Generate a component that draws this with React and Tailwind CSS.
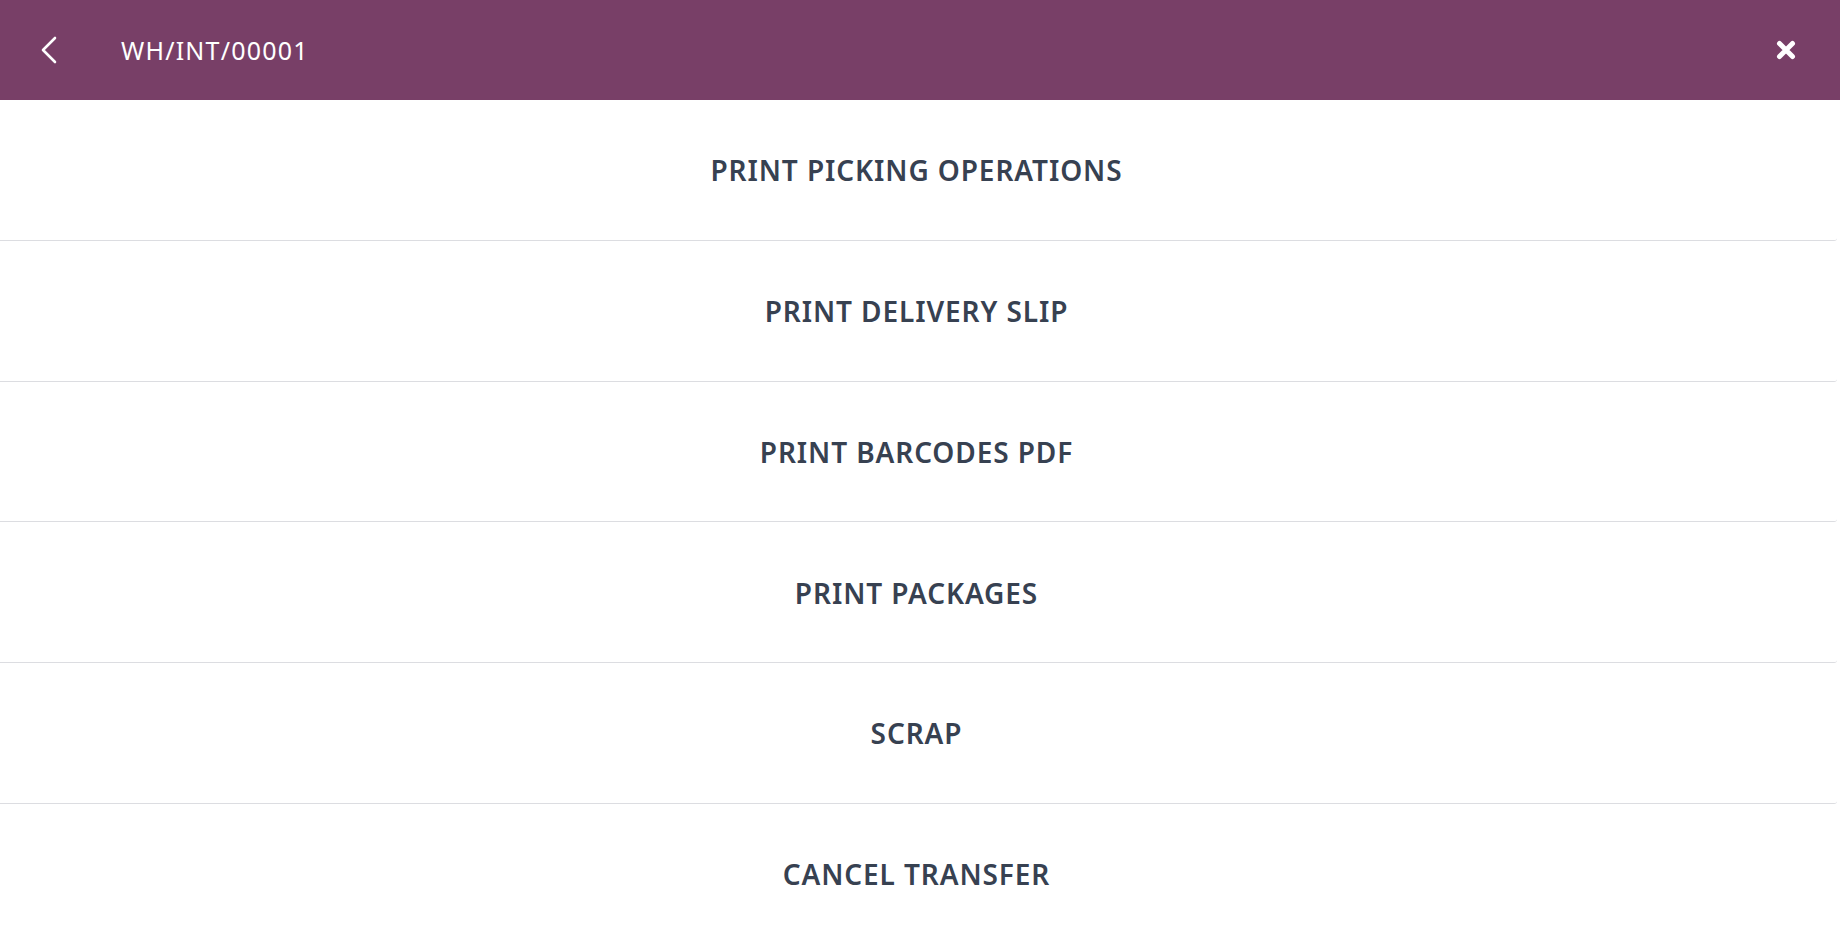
import React from "react";

const items = [
  "PRINT PICKING OPERATIONS",
  "PRINT DELIVERY SLIP",
  "PRINT BARCODES PDF",
  "PRINT PACKAGES",
  "SCRAP",
  "CANCEL TRANSFER",
];

export default function App() {
  return (
    <div
      className="w-[1840px] h-[941px] overflow-hidden bg-white"
      style={{ fontFamily: '"Noto Sans", "Open Sans", sans-serif' }}
    >
      <header className="h-[100px] bg-[#783f67] flex items-center text-white">
        <button className="w-[121px] h-full flex items-center pl-[40px]">
          <svg width="18" height="28" viewBox="0 0 18 28" fill="none">
            <path d="M15 2 L3 14 L15 26" stroke="white" strokeWidth="2.6" strokeLinecap="round" strokeLinejoin="round" />
          </svg>
        </button>
        <div className="flex-1 text-[25px] leading-none tracking-[1.2px] pt-[1px]">WH/INT/00001</div>
        <button className="h-full flex items-center pr-[44px]">
          <svg width="20" height="20" viewBox="0 0 20 20">
            <path d="M3.5 3.5 L16.5 16.5 M16.5 3.5 L3.5 16.5" stroke="white" strokeWidth="5" strokeLinecap="round" />
          </svg>
        </button>
      </header>
      <div className="mr-[3px]">
        {items.map((t) => (
          <button
            key={t}
            className="w-full h-[140.75px] border-b border-[#dcdde1] rounded-br-[3px] flex items-center justify-center text-[28px] font-semibold text-[#374151] tracking-[0.9px] pt-[1px] pr-[4px]"
          >
            {t}
          </button>
        ))}
      </div>
    </div>
  );
}
